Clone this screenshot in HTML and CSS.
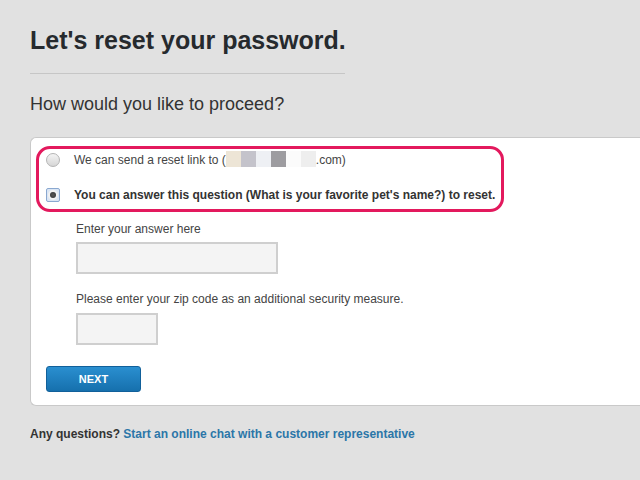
FILE: index.html
```html
<!DOCTYPE html>
<html>
<head>
<meta charset="utf-8">
<link rel="stylesheet" href="styles.css">
</head>
<body>
<div class="page">
  <h1 class="title">Let's reset your password.</h1>
  <div class="rule"></div>
  <h2 class="subtitle">How would you like to proceed?</h2>
  <div class="panel">
    <div class="highlight"></div>
    <div class="option">
      <span class="radio"></span>
      <span class="opt-text">We can send a reset link to (<span class="blur"><i class="b1"></i><i class="b2"></i><i class="b3"></i><i class="b4"></i><i class="b5"></i><i class="b6"></i></span>.com)</span>
    </div>
    <div class="option">
      <span class="radio checked"><span class="dot"></span></span>
      <span class="opt-text bold">You can answer this question (What is your favorite pet's name?) to reset.</span>
    </div>
    <div class="fields">
      <div class="label">Enter your answer here</div>
      <div class="input wide"></div>
      <div class="label second">Please enter your zip code as an additional security measure.</div>
      <div class="input short"></div>
    </div>
    <button class="next">NEXT</button>
  </div>
  <p class="footer"><span class="q">Any questions?</span> <a class="chat">Start an online chat with a customer representative</a></p>
</div>
</body>
</html>
```
FILE: styles.css
```css
html, body {
  margin: 0;
  padding: 0;
  background: #e1e1e1;
  overflow: hidden;
  font-family: "Liberation Sans", Arial, sans-serif;
}
.page {
  padding: 24px 0 0 30px;
}
.title {
  margin: 0;
  font-size: 25px;
  line-height: 32px;
  font-weight: bold;
  color: #262a2e;
}
.rule {
  width: 315px;
  height: 1px;
  background: #c6c6c6;
  margin-top: 17px;
}
.subtitle {
  margin: 19px 0 0 0;
  font-size: 18px;
  line-height: 22px;
  font-weight: normal;
  color: #333;
}
.panel {
  position: relative;
  margin-top: 22px;
  background: #fff;
  border: 1px solid #c9c9c9;
  border-right: none;
  border-radius: 6px 0 0 6px;
  padding: 12px 0 13px 15px;
}
.highlight {
  position: absolute;
  left: 5px;
  top: 8px;
  width: 462px;
  height: 60px;
  border: 3px solid #e3195d;
  border-radius: 14px;
}
.option {
  display: flex;
  align-items: center;
  height: 20px;
  margin-bottom: 15px;
  font-size: 12px;
  color: #444;
}
.option:nth-child(3) {
  margin-bottom: 0;
}
.radio {
  width: 12px;
  height: 12px;
  border-radius: 50%;
  border: 1px solid #b4b4b4;
  background: linear-gradient(#f4f4f4, #d6d6d6);
  margin-right: 14px;
  flex: none;
  display: flex;
  align-items: center;
  justify-content: center;
}
.radio.checked {
  border-radius: 2px;
  border: 1px solid #8aa8d0;
  background: #dbe6f4;
}
.dot {
  width: 6px;
  height: 6px;
  border-radius: 50%;
  background: radial-gradient(#555, #333);
  box-shadow: 0 0 0 2px #f2f2f2;
}
.opt-text {
  white-space: nowrap;
}
.bold {
  font-weight: bold;
  color: #333;
}
.blur {
  display: inline-flex;
  vertical-align: middle;
  height: 16px;
  margin-top: -2px;
}
.blur i {
  display: block;
  width: 15px;
  height: 16px;
}
.b1 { background: #ede5d6; }
.b2 { background: #c4c3cb; }
.b3 { background: #eef0f4; }
.b4 { background: #9d9ca0; }
.b5 { background: #fbfbfb; }
.b6 { background: #eeeeee; }
.fields {
  margin: 16px 0 0 30px;
}
.label {
  font-size: 12px;
  line-height: 16px;
  color: #444;
}
.label.second {
  margin-top: 17px;
}
.input {
  margin-top: 5px;
  height: 28px;
  background: #f4f4f4;
  border: 2px solid #cfcfcf;
  box-sizing: content-box;
}
.input.wide { width: 198px; }
.input.short { width: 78px; margin-top: 6px; }
.next {
  display: block;
  margin-top: 21px;
  width: 95px;
  height: 26px;
  border: 1px solid #11609a;
  border-radius: 3px;
  background: linear-gradient(#2a8fd0, #1670ad);
  color: #fff;
  font-family: "Liberation Sans", Arial, sans-serif;
  font-size: 11px;
  font-weight: bold;
  padding: 0;
}
.footer {
  margin: 20px 0 0 0;
  font-size: 12px;
  line-height: 16px;
  font-weight: bold;
}
.q {
  color: #333;
}
.chat {
  color: #2b76a8;
  text-decoration: none;
}
```
